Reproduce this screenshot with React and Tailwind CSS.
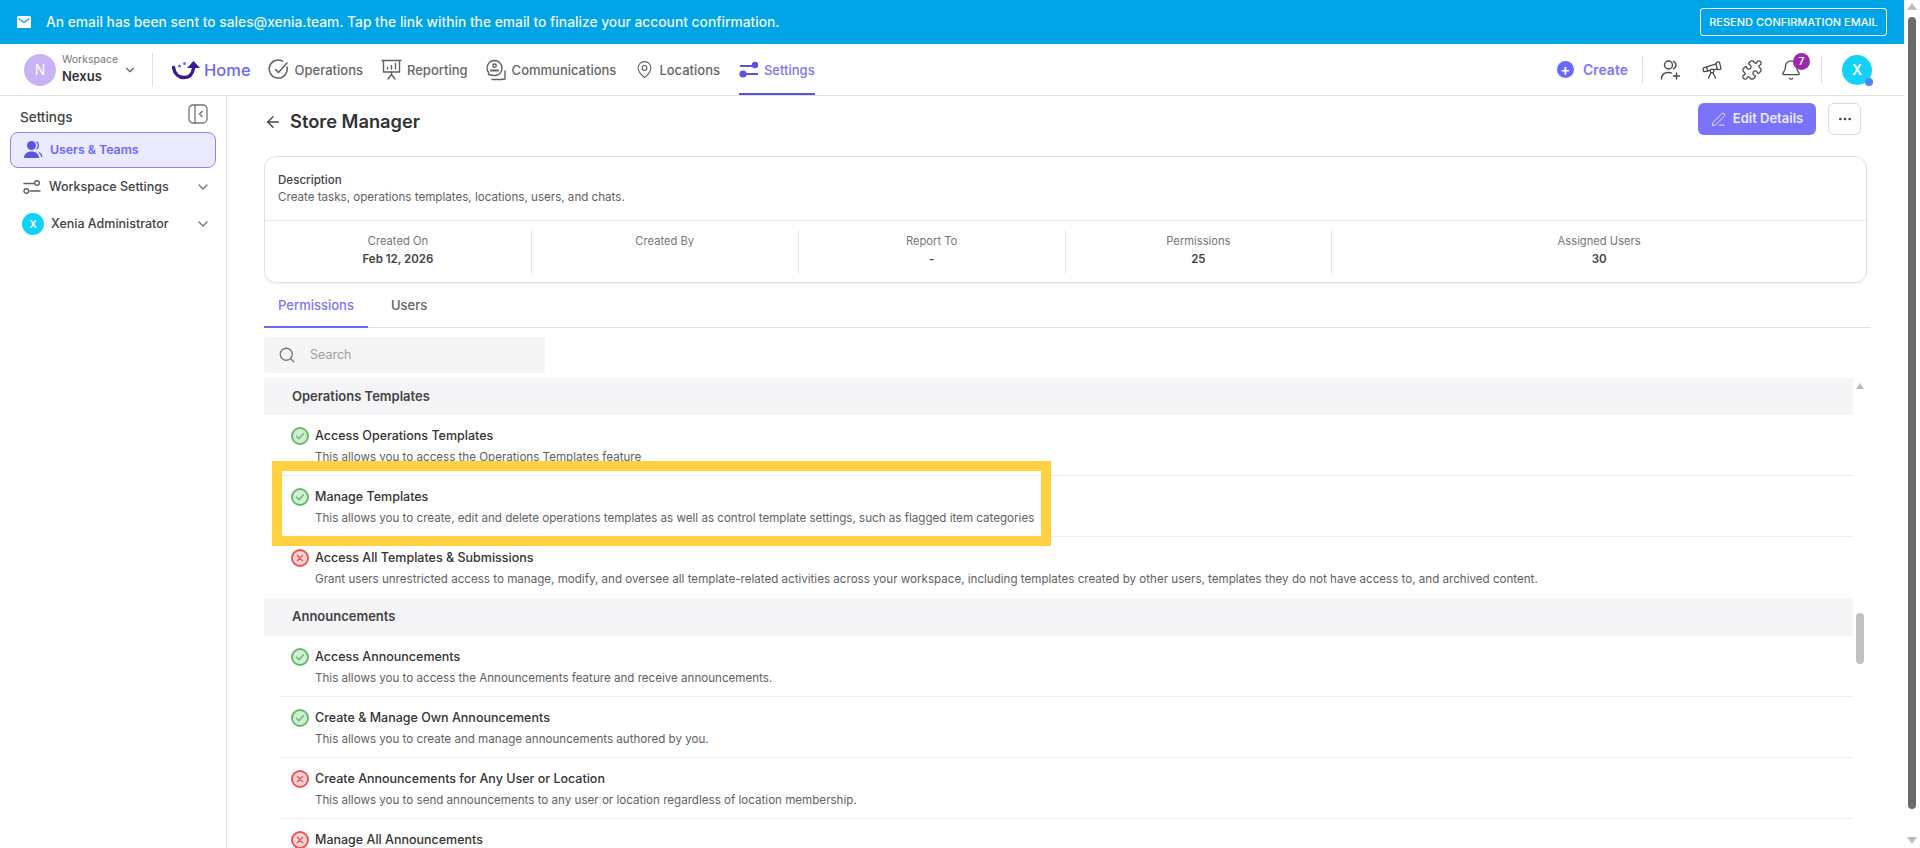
import React from 'react';
import { ArrowLeft, Bell, ChevronDown, Ellipsis, MapPin, PenLine, Puzzle, Search, Telescope } from 'lucide-react';

const sections = [
  {
    title: 'Operations Templates',
    headerClass: 'h-[37px]',
    rows: [
      { ok: true, name: 'Access Operations Templates', text: 'This allows you to access the Operations Templates feature' },
      { ok: true, name: 'Manage Templates', text: 'This allows you to create, edit and delete operations templates as well as control template settings, such as flagged item categories' },
      { ok: false, name: 'Access All Templates & Submissions', text: 'Grant users unrestricted access to manage, modify, and oversee all template-related activities across your workspace, including templates created by other users, templates they do not have access to, and archived content.', last: true },
    ],
  },
  {
    title: 'Announcements',
    headerClass: 'h-[38px]',
    rows: [
      { ok: true, name: 'Access Announcements', text: 'This allows you to access the Announcements feature and receive announcements.' },
      { ok: true, name: 'Create & Manage Own Announcements', text: 'This allows you to create and manage announcements authored by you.' },
      { ok: false, name: 'Create Announcements for Any User or Location', text: 'This allows you to send announcements to any user or location regardless of location membership.' },
      { ok: false, name: 'Manage All Announcements', text: '' },
    ],
  },
];

const stats = [
  { label: 'Created On', value: 'Feb 12, 2026', className: 'col-span-1' },
  { label: 'Created By', value: '', className: 'col-span-1' },
  { label: 'Report To', value: '-', className: 'col-span-1' },
  { label: 'Permissions', value: '25', className: 'col-span-1' },
  { label: 'Assigned Users', value: '30', className: 'col-span-2' },
];

function XeniaLogo() {
  return (
    <svg width="30" height="22" viewBox="0 0 30 22" fill="none">
      <path d="M2.5 8.5c1 6.5 5.500 10 10.500 10 5 0 8.500-3.500 9.500-9" stroke="#3b1a8f" strokeWidth="3.400" strokeLinecap="round" />
      <path d="M22.500 2 29 9h-13z" fill="#3b1a8f" />
      <circle cx="8.500" cy="7" r="1.500" fill="#6868fe" />
      <circle cx="13.500" cy="4.500" r="1.500" fill="#6868fe" />
    </svg>
  );
}

function OperationsIcon() {
  return (
    <svg width="22" height="22" viewBox="0 0 22 22" fill="none" stroke="#616161" strokeWidth="1.500" strokeLinecap="round" strokeLinejoin="round">
      <path d="M19 8a9 9 0 1 1-4.400-5.800" />
      <path d="m7.500 10.500 3 3 8.500-9.500" />
    </svg>
  );
}

function ReportingIcon() {
  return (
    <svg width="21" height="21" viewBox="0 0 21 21" fill="none" stroke="#616161" strokeWidth="1.400" strokeLinecap="round" strokeLinejoin="round">
      <path d="M1 1.500h19M2.500 1.500v11.500h16V1.500" />
      <path d="M10.500 13v2.500M7 20l3.500-4.500L14 20" />
      <path d="M6.500 10V8.500M10.500 10V6.500M14.500 10V4.500" />
    </svg>
  );
}

function CommunicationsIcon() {
  return (
    <svg width="22" height="22" viewBox="0 0 22 22" fill="none" stroke="#616161" strokeWidth="1.400" strokeLinecap="round" strokeLinejoin="round">
      <path d="M9.500 1.500a7.500 7.500 0 0 1 7.500 7.500c0 4.500-3 7.500-7.500 7.500-1.600 0-4-.2-6-1 .4-.8.3-1.500-.2-2.400A7.500 7.500 0 0 1 9.500 1.500z" />
      <circle cx="9.500" cy="6.700" r="1.700" />
      <path d="M6 11.500h7" strokeWidth="2" />
      <path d="M7 20.500h9.500l3.500-.5v-8" />
    </svg>
  );
}

function SettingsNavIcon() {
  return (
    <svg width="20" height="20" viewBox="0 0 20 20" fill="#5a54e6">
      <path d="M1 5h13v2H1zM6 13h13v2H6z" />
      <circle cx="16" cy="5" r="3.200" />
      <circle cx="4" cy="14" r="3.600" />
    </svg>
  );
}

function UsersTeamsIcon() {
  return (
    <svg width="20" height="20" viewBox="0 0 20 20" fill="#5a54e6">
      <circle cx="8.500" cy="5.500" r="4.500" />
      <path d="M1 18c0-4 3.200-6.500 7.500-6.500S16 14 16 18z" />
      <path d="M13.500 1.800a4.600 4.600 0 0 1 0 7.400" fill="none" stroke="#5a54e6" strokeWidth="1.300" />
      <path d="M16 12.500c1.500.8 2.500 2.500 3 4.500" fill="none" stroke="#5a54e6" strokeWidth="1.300" />
    </svg>
  );
}

function SlidersIcon() {
  return (
    <svg width="18" height="18" viewBox="0 0 18 18" fill="none" stroke="#616161" strokeWidth="1.400" strokeLinecap="round">
      <path d="M1 5.500h10M7 13h10" />
      <circle cx="14" cy="5" r="2.300" />
      <circle cx="3.300" cy="13" r="2.300" />
    </svg>
  );
}

function PanelToggleIcon() {
  return (
    <svg width="20" height="20" viewBox="0 0 20 20" fill="none" stroke="#757575" strokeWidth="1.300" strokeLinecap="round" strokeLinejoin="round">
      <rect x="1" y="1" width="18" height="18" rx="4" />
      <path d="M7 1v18" />
      <path d="m14 7.500-2.500 2.500 2.500 2.500" strokeWidth="1.600" />
    </svg>
  );
}

function InviteIcon() {
  return (
    <svg width="22" height="22" viewBox="0 0 22 22" fill="none" stroke="#4a4a4a" strokeWidth="1.400" strokeLinecap="round">
      <circle cx="8.500" cy="6" r="4" />
      <path d="M13.500 2.300a4 4 0 0 1 0 7.400" />
      <path d="M1.500 20c0-4.500 2.500-6.500 7-6.500 1 0 2 .1 2.800.4" />
      <path d="M16.500 14v6M13.500 17h6" />
    </svg>
  );
}

function MailIcon() {
  return (
    <svg width="14" height="12" viewBox="0 0 14 12" className="shrink-0">
      <rect width="14" height="12" rx="1.500" fill="white" />
      <path d="m1.500 2.500 5.500 4 5.500-4" fill="none" stroke="#00a5e8" strokeWidth="1.300" />
    </svg>
  );
}

function StatusIcon({ ok }) {
  const stroke = ok ? '#66bb6a' : '#ef5350';
  const fill = ok ? '#d3edd4' : '#ffd6da';
  return (
    <svg width="18" height="18" viewBox="0 0 18 18" fill="none" className="shrink-0">
      <circle cx="9" cy="9" r="8" fill={fill} stroke={stroke} strokeWidth="2" />
      {ok ? (
        <path d="m5.500 9.300 2.400 2.400 4.600-5" stroke={stroke} strokeWidth="1.400" strokeLinecap="round" strokeLinejoin="round" />
      ) : (
        <path d="m6.300 6.300 5.400 5.400m0-5.400-5.400 5.400" stroke={stroke} strokeWidth="1.400" strokeLinecap="round" />
      )}
    </svg>
  );
}

function NavItem({ icon, label, active, className }) {
  return (
    <div className={`relative flex h-full items-center gap-[5px] text-[13px] font-medium ${active ? 'text-[#7c74f5]' : 'text-[#666666]'} ${className}`}>
      {icon}
      <span className="mt-[2px]">{label}</span>
      {active && <div className="absolute bottom-0 left-0 right-0 h-[2.500px] bg-[#5a54d8]" />}
    </div>
  );
}

export default function App() {
  return (
    <div className="flex h-[848px] w-full overflow-hidden bg-white font-['Inter',sans-serif] text-[#212121]">
      <div className="flex min-w-0 flex-1 flex-col">
        <div className="flex h-[44px] shrink-0 items-center justify-between bg-[#00a5e8] pl-[17px] pr-[17px] text-white">
          <div className="flex items-center gap-[15px]">
            <MailIcon />
            <span className="text-[13.800px] font-medium text-white/95">An email has been sent to sales@xenia.team. Tap the link within the email to finalize your account confirmation.</span>
          </div>
          <button className="flex h-[28px] w-[187px] items-center justify-center rounded-[3px] border-[1.500px] border-white text-[11px] font-medium">RESEND CONFIRMATION EMAIL</button>
        </div>

        <div className="flex h-[52px] shrink-0 items-center border-b border-[#e0e0e0]">
          <div className="ml-[24px] flex items-center">
            <div className="flex h-[32px] w-[32px] items-center justify-center rounded-full bg-[#c9b3f5] text-[14px] text-white">N</div>
            <div className="ml-[6px] w-[61px] leading-none">
              <div className="-mt-px text-[10.500px] text-[#757575]">Workspace</div>
              <div className="mt-[5px] text-[13px] font-semibold text-[#333333]">Nexus</div>
            </div>
            <ChevronDown className="h-[14px] w-[14px] text-[#616161]" />
          </div>
          <div className="ml-[15px] h-[34px] w-px bg-[#e0e0e0]" />
          <div className="ml-[18px] flex h-full items-center gap-[3px] text-[16.500px] font-medium text-[#6868fe]">
            <XeniaLogo />
            <span className="mt-[2px]">Home</span>
          </div>
          <div className="flex h-full items-center">
            <NavItem icon={<OperationsIcon />} label="Operations" className="ml-[17px]" />
            <NavItem icon={<ReportingIcon />} label="Reporting" className="ml-[18px]" />
            <NavItem icon={<CommunicationsIcon />} label="Communications" className="ml-[17px]" />
            <NavItem icon={<MapPin className="h-[21px] w-[19px] text-[#616161]" strokeWidth={1.400} />} label="Locations" className="ml-[19px]" />
            <NavItem icon={<SettingsNavIcon />} label="Settings" active className="ml-[19px]" />
          </div>
          <div className="ml-auto flex h-full items-center">
            <div className="flex h-[17px] w-[17px] items-center justify-center rounded-full bg-[#6868fe] text-[15px] leading-none font-semibold text-white">+</div>
            <span className="ml-[9px] text-[14px] font-semibold text-[#8078f5]">Create</span>
            <div className="ml-[14px] h-[26px] w-px bg-[#e0e0e0]" />
            <div className="ml-[17px]"><InviteIcon /></div>
            <Telescope className="ml-[19px] h-[22px] w-[22px] text-[#4a4a4a]" strokeWidth={1.400} />
            <Puzzle className="ml-[18px] h-[22px] w-[22px] text-[#4a4a4a]" strokeWidth={1.400} />
            <div className="relative ml-[17px]">
              <Bell className="h-[22px] w-[22px] text-[#4a4a4a]" strokeWidth={1.400} />
              <div className="absolute -right-[8px] -top-[6px] flex h-[17px] w-[17px] items-center justify-center rounded-full bg-[#9c27b0] text-[10px] font-semibold text-white">7</div>
            </div>
            <div className="ml-[19px] h-[26px] w-px bg-[#e0e0e0]" />
            <div className="relative ml-[20px] mr-[32px] flex h-[30px] w-[30px] items-center justify-center rounded-full bg-[#12d2f7] text-[14px] font-semibold text-white">
              X
              <div className="absolute -bottom-px -right-px h-[8px] w-[8px] rounded-full bg-[#3f8cf2]" />
            </div>
          </div>
        </div>

        <div className="flex min-h-0 flex-1">
          <aside className="w-[227px] shrink-0 border-r border-[#e0e0e0] pl-[10px] pr-[10px]">
            <div className="flex h-[36px] items-center justify-between pl-[10px] pr-[8px]">
              <span className="mt-[6px] text-[13.500px] font-medium text-[#424242]">Settings</span>
              <PanelToggleIcon />
            </div>
            <div className="flex h-[36px] items-center gap-[7px] rounded-[8px] border border-[#8c84f5] bg-[#ebeafe] pl-[12px] text-[12.300px] font-semibold text-[#6868fe]">
              <UsersTeamsIcon />
              <span>Users &amp; Teams</span>
            </div>
            <div className="mt-[1px] flex h-[36px] items-center pl-[13px] pr-[5px] text-[12.500px] font-medium text-[#424242]">
              <SlidersIcon />
              <span className="ml-[8px]">Workspace Settings</span>
              <ChevronDown className="ml-auto h-[16px] w-[16px] text-[#757575]" />
            </div>
            <div className="mt-px flex h-[36px] items-center pl-[12px] pr-[5px] text-[12.500px] font-medium text-[#424242]">
              <div className="flex h-[22px] w-[22px] items-center justify-center rounded-full bg-[#12d2f7] text-[10px] font-semibold text-white">X</div>
              <span className="ml-[7px]">Xenia Administrator</span>
              <ChevronDown className="ml-auto h-[16px] w-[16px] text-[#757575]" />
            </div>
          </aside>

          <main className="relative flex min-w-0 flex-1 flex-col overflow-hidden pl-[37px] pr-[37px]">
            <div className="flex h-[60px] shrink-0 items-start justify-between">
              <div className="mt-[12px] flex items-center gap-[8px]">
                <ArrowLeft className="h-[18px] w-[18px] text-[#424242]" strokeWidth={1.800} />
                <h1 className="text-[18.300px] font-semibold text-[#333333]">Store Manager</h1>
              </div>
              <div className="mr-[6px] mt-[7px] flex items-center gap-[12px]">
                <button className="flex h-[32px] w-[118px] items-center justify-center gap-[7px] rounded-[6px] bg-[#7b72fa] text-[13px] font-semibold text-white/85">
                  <PenLine className="h-[15px] w-[15px]" strokeWidth={1.500} />
                  Edit Details
                </button>
                <button className="flex h-[32px] w-[33px] items-center justify-center rounded-[6px] border border-[#d9d9d9] text-[#424242]">
                  <Ellipsis className="h-[16px] w-[16px]" />
                </button>
              </div>
            </div>

            <div className="h-[127px] shrink-0 rounded-[12px] border border-[#e0e0e0] shadow-[0_1px_2px_rgba(0,0,0,0.06)]">
              <div className="h-[63.500px] border-b border-[#e8e8e8] pl-[13px] pt-[15px] text-[11.600px] leading-[17px]">
                <div className="font-medium text-[#424242]">Description</div>
                <div className="text-[#616161]">Create tasks, operations templates, locations, users, and chats.</div>
              </div>
              <div className="grid h-[63px] grid-cols-6 items-center">
                {stats.map((stat, i) => (
                  <div key={stat.label} className={`flex h-[42px] flex-col items-center ${stat.className} ${i < stats.length - 1 ? 'border-r border-[#e0e0e0]' : ''}`}>
                    <span className="text-[11.200px] leading-[20px] text-[#757575]">{stat.label}</span>
                    <span className="text-[11.500px] leading-[17px] font-semibold text-[#424242]">{stat.value}</span>
                  </div>
                ))}
              </div>
            </div>

            <div className="-mr-[4px] flex h-[45px] shrink-0 border-b border-[#e0e0e0] text-[13px] font-medium">
              <div className="relative flex w-[104px] items-center justify-center text-[#7c74f5]">
                <span className="mt-[2px]">Permissions</span>
                <div className="absolute -bottom-px left-0 right-0 h-[2px] bg-[#6868fe]" />
              </div>
              <div className="ml-[23px] flex items-center text-[#616161]">
                <span className="mt-[2px]">Users</span>
              </div>
            </div>

            <div className="mt-[9px] flex h-[36px] w-[281px] shrink-0 items-center gap-[14px] rounded-[4px] bg-[#f5f5f5] pl-[14px]">
              <Search className="h-[18px] w-[18px] text-[#757575]" strokeWidth={1.700} />
              <span className="text-[12.500px] text-[#9e9e9e]">Search</span>
            </div>

            <div className="mt-[5px] flex min-h-0 flex-1">
              <div className="w-[1589px] shrink-0">
                {sections.map((section) => (
                  <div key={section.title}>
                    <div className={`flex items-center bg-[#f5f5f8] pl-[28px] text-[13px] font-semibold text-[#424242] ${section.headerClass}`}>{section.title}</div>
                    {section.rows.map((row) => (
                      <div key={row.name} className={`ml-[16px] h-[61px] pl-[11px] pt-[11px] ${row.last ? '' : 'border-b border-[#efefef]'}`}>
                        <div className="flex h-[20px] items-center gap-[6px]">
                          <StatusIcon ok={row.ok} />
                          <span className="text-[12.500px] font-medium text-[#333333]">{row.name}</span>
                        </div>
                        {row.text && <div className="mt-[2px] pl-[24px] text-[11.600px] leading-[18px] text-[#616161]">{row.text}</div>}
                      </div>
                    ))}
                  </div>
                ))}
              </div>
              <div className="relative ml-[3px] w-[8px] shrink-0">
                <svg width="8" height="6" viewBox="0 0 8 6" className="absolute left-0 top-[5px]">
                  <path d="M4 0 8 6H0z" fill="#bdbdbd" />
                </svg>
                <div className="absolute left-0 top-[235px] h-[51px] w-[8px] rounded-[4px] bg-[#c1c1c1]" />
              </div>
            </div>

            <div className="absolute left-[45px] top-[365px] h-[85px] w-[779px] border-[10px] border-[#ffd040]" />
          </main>
        </div>
      </div>

      <div className="relative flex w-[16px] shrink-0 flex-col items-center">
        <svg width="10" height="7" viewBox="0 0 10 7" className="mt-[3px] shrink-0">
          <path d="M5 0 10 7H0z" fill="#bdbdbd" />
        </svg>
        <div className="mt-[7px] h-[792px] w-[8px] shrink-0 rounded-[4px] bg-[#6b6b6b]" />
        <svg width="10" height="7" viewBox="0 0 10 7" className="mt-[28px] shrink-0">
          <path d="M5 7 10 0H0z" fill="#bdbdbd" />
        </svg>
      </div>
    </div>
  );
}
